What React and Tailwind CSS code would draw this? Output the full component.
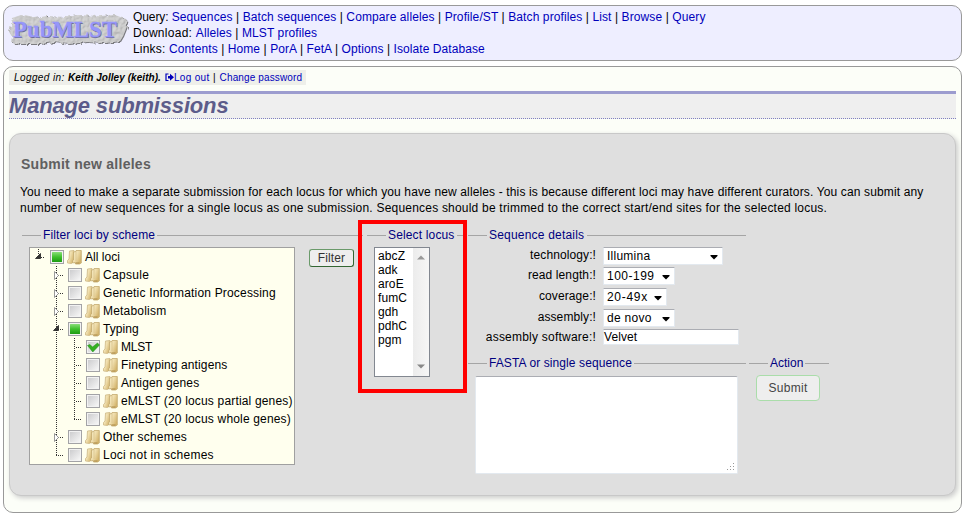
import React from "react";

const FONT = "font-['Liberation_Sans',Arial,sans-serif]";

function Links({ label, items, className, labelClass = "" }) {
  return (
    <div className={`whitespace-nowrap ${className}`}>
      <span className={labelClass}>{label}: </span>
      {items.map((item, i) => (
        <React.Fragment key={item}>
          {i > 0 && " | "}
          <a className="text-[#0000bb]">{item}</a>
        </React.Fragment>
      ))}
    </div>
  );
}

function Logo() {
  return (
    <svg width="122" height="36" viewBox="0 0 122 36" className="shrink-0">
      <defs>
        <filter id="stone" x="-5%" y="-10%" width="110%" height="120%">
          <feTurbulence type="fractalNoise" baseFrequency="0.28" numOctaves="2" seed="7" result="n" />
          <feDisplacementMap in="SourceGraphic" in2="n" scale="5" result="d" />
          <feDiffuseLighting in="n" surfaceScale="0.9" diffuseConstant="1.15" lightingColor="#cacaca" result="l">
            <feDistantLight azimuth="225" elevation="62" />
          </feDiffuseLighting>
          <feComposite in="l" in2="d" operator="in" result="tex" />
          <feDropShadow in="tex" dx="1" dy="1" stdDeviation="0.5" floodColor="#555" floodOpacity="0.75" />
        </filter>
      </defs>
      <path
        d="M5 6 L14 3 L28 6 L40 4 L58 5 L72 3 L92 4 L108 3 L119 7 L120 14 L116 24 L113 29 L98 31 L80 30 L62 32 L48 30 L32 32 L14 32 L5 31 L6 25 L2 20 L4 13 Z"
        fill="#c8c8c8"
        filter="url(#stone)"
      />
      <g fontFamily="'Liberation Serif', serif" fontWeight="700" fontSize="22.5">
        <text x="6.8" y="25.8" textLength="104" lengthAdjust="spacingAndGlyphs" fill="#6c6c96">PubMLST</text>
        <text x="6" y="25" textLength="104" lengthAdjust="spacingAndGlyphs" fill="#9696fa" stroke="#9696fa" strokeWidth="0.3">PubMLST</text>
      </g>
    </svg>
  );
}

function Legend({ children, className = "" }) {
  return (
    <div className="flex h-4 items-center whitespace-nowrap text-[#000080]">
      <span className="h-px w-[19px] bg-[#a5a5a5]" />
      <span className={`ml-0.5 ${className}`}>{children}</span>
      <span className="ml-0.5 h-px grow bg-[#a5a5a5]" />
    </div>
  );
}

/* One 18px cell of the tree: guide lines, optionally with an expander arrow. */
function Guide({ kind }) {
  const dots = { stroke: "#333", strokeDasharray: "1 1", shapeRendering: "crispEdges", fill: "none" };
  return (
    <svg width="18" height="18" className="shrink-0">
      {kind === "root" && <path d="M8.5 1V6M11 9.5H15" {...dots} />}
      {kind === "line" && <path d="M8.5 0V18" {...dots} />}
      {(kind === "tee" || kind === "closed" || kind === "open") && <path d="M8.5 0V18M10 9.5H15" {...dots} />}
      {kind === "end" && <path d="M8.5 0V9M8 9.5H15" {...dots} />}
      {kind === "closed" && <path d="M6.5 5.5V13.5L10.5 9.5Z" fill="#fff" stroke="#999" />}
      {(kind === "root" || kind === "open") && <path d="M10.5 5.5V10.5H5.5Z" fill="#333" stroke="#222" strokeWidth=".8" />}
    </svg>
  );
}

function Box({ state }) {
  return (
    <svg width="18" height="18" className="shrink-0">
      <defs>
        <linearGradient id="boxFill" x1="0" y1="0" x2="1" y2="1">
          <stop offset="0" stopColor="#cdcdcf" />
          <stop offset="1" stopColor="#f6f6f6" />
        </linearGradient>
        <linearGradient id="boxGreen" x1="0" y1="0" x2="0" y2="1">
          <stop offset="0" stopColor="#8ade78" />
          <stop offset="0.5" stopColor="#3fc02c" />
          <stop offset="1" stopColor="#1d9a12" />
        </linearGradient>
      </defs>
      <rect x="2.5" y="2.5" width="13" height="13" fill="#f2f2f2" stroke="#a3a3a6" />
      <rect x="4" y="4" width="10" height="10" fill="url(#boxFill)" />
      {state === "part" && <rect x="4" y="4" width="10" height="10" rx=".5" fill="url(#boxGreen)" />}
      {state === "on" && <path d="M3.5 7.5L6 6.5L8.5 9L13.5 5L15.5 7L8.8 14Z" fill="#35b023" stroke="#1f8a14" strokeWidth=".5" />}
    </svg>
  );
}

function Folder() {
  return (
    <svg width="18" height="18" className="mr-px shrink-0">
      <defs>
        <linearGradient id="fold" x1="0" y1="0" x2="1" y2="0.6">
          <stop offset="0" stopColor="#f6ebc6" />
          <stop offset="0.5" stopColor="#f0dfae" />
          <stop offset="1" stopColor="#d3b46c" />
        </linearGradient>
      </defs>
      <path d="M3.5 3L8 2.5V13L5.5 15.5L1.5 15V12.5L3 11Z" fill="url(#fold)" stroke="#cdb885" strokeWidth=".8" />
      <path d="M7.5 4L10 3.5V2.5H15.3V15L13.5 16H9.5L9 14.5L6.5 15V12.5L7.5 12Z" fill="url(#fold)" stroke="#c4ab70" strokeWidth=".8" />
      <path d="M10 4V13" stroke="#d9c48f" strokeWidth=".8" />
      <path d="M9.5 15H13.5" stroke="#ab8a48" />
    </svg>
  );
}

const TREE = [
  [["root"], "part", "All loci", "tracking-[0.05px]"],
  [["", "closed"], "off", "Capsule", "tracking-[0.3px]"],
  [["", "closed"], "off", "Genetic Information Processing", "tracking-[0.18px]"],
  [["", "closed"], "off", "Metabolism", "tracking-[0.2px]"],
  [["", "open"], "part", "Typing", "tracking-[0.05px]"],
  [["", "line", "tee"], "on", "MLST", "tracking-[-0.2px]"],
  [["", "line", "tee"], "off", "Finetyping antigens", "tracking-[0.12px]"],
  [["", "line", "tee"], "off", "Antigen genes", "tracking-[0.12px]"],
  [["", "line", "tee"], "off", "eMLST (20 locus partial genes)", "tracking-[0.17px]"],
  [["", "line", "end"], "off", "eMLST (20 locus whole genes)", "tracking-[0.17px]"],
  [["", "closed"], "off", "Other schemes", "tracking-[0.2px]"],
  [["", "end"], "off", "Loci not in schemes", "tracking-[0.25px]"],
];

function Tree() {
  return (
    <div className="ml-[7px] h-[218px] w-[266px] overflow-hidden border border-[#a0a0a0] bg-[#ffffee]">
      {TREE.map(([guides, state, label, track]) => (
        <div key={label} className="flex h-[18px] items-center whitespace-nowrap">
          {guides.map((g, i) => (
            <Guide key={i} kind={g} />
          ))}
          <Box state={state} />
          <Folder />
          <span className={`leading-[18px] ${track}`}>{label}</span>
        </div>
      ))}
    </div>
  );
}

function Scrollbar() {
  return (
    <div className="flex w-4 flex-col items-center justify-between bg-linear-to-r from-[#ececec] to-[#f6f6f6] py-[7px]">
      <svg width="8" height="5"><path d="M0 4.5L4 0.5L8 4.5Z" fill="#999" /></svg>
      <svg width="8" height="5"><path d="M0 0.5L4 4.5L8 0.5Z" fill="#888" /></svg>
    </div>
  );
}

function Select({ children, className }) {
  return (
    <div className={`flex items-center justify-between rounded-[1px] border border-[#e3e9ef] border-t-[#abadb3] bg-white px-[3px] ${className}`}>
      <span className="leading-4">{children}</span>
      <svg width="8" height="5" className="-ml-1 mr-px mt-[3px] shrink-0"><path d="M0.5 0H7.5V1L4 4.5L0.5 1Z" fill="#000" /></svg>
    </div>
  );
}

function Row({ label, labelClass = "tracking-[0.1px]", className, children }) {
  return (
    <div className={`flex items-start ${className}`}>
      <div className={`w-32 whitespace-nowrap text-right leading-4 ${labelClass}`}>{label}:!</div>
      <div className="ml-[7px] flex">{children}</div>
    </div>
  );
}

export default function App() {
  return (
    <div className={`h-[528px] w-[965px] overflow-hidden bg-white pl-[3px] pt-[5px] text-[12px] leading-4 text-black ${FONT}`}>
      <header className="flex h-14 w-[959px] rounded-[10px] border border-[#999] bg-[#eeeeff] pl-[3px] pt-[3px]">
        <div className="pt-[3px]"><Logo /></div>
        <nav className="ml-1">
          <Links
            label="Query"
            className="tracking-[0.1px]"
            labelClass="tracking-[-0.1px]"
            items={["Sequences", "Batch sequences", "Compare alleles", "Profile/ST", "Batch profiles", "List", "Browse", "Query"]}
          />
          <Links label="Download" className="tracking-[0.1px]" labelClass="tracking-[0.28px]" items={["Alleles", "MLST profiles"]} />
          <Links label="Links" className="tracking-[0.08px]" labelClass="tracking-[0.2px]" items={["Contents", "Home", "PorA", "FetA", "Options", "Isolate Database"]} />
        </nav>
      </header>

      <main className="mt-[5px] h-[447px] w-[959px] rounded-[10px] border border-[#999] bg-[#fcfef8] pl-[5px] pt-[3px]">
        <div className="flex h-[15px] w-[297px] items-center whitespace-nowrap bg-[#eeefea] pl-[5px] text-[10px]">
          <span className="w-[54px] italic tracking-[0.4px]">Logged in:</span>
          <b className="w-[94px] italic tracking-[0.06px]">Keith Jolley (keith).</b>
          <svg width="9" height="9" viewBox="0 0 9 9" className="ml-[3px] shrink-0">
            <path d="M3.5 1H1V7.5H3.5" fill="none" stroke="#0000bb" strokeWidth="1.2" />
            <path d="M3 3H5V0.8L9 4.3L5 7.8V5.6H3Z" fill="#0000bb" />
          </svg>
          <a className="w-9 tracking-[0.3px] text-[#0000bb]">Log out</a>
          <span className="ml-[3px] mr-1">|</span>
          <a className="tracking-[0.13px] text-[#0000bb]">Change password</a>
        </div>

        <h1 className="mt-1.5 h-7 w-[947px] border-b border-t-[3px] border-b-[#8080c0] border-t-[#9c9ccf] bg-[#efefef] text-[22px] font-bold italic leading-6 tracking-[-0.17px] text-[#5c5c8a] [border-bottom-style:dotted]">
          Manage submissions
        </h1>

        <section className="mt-3.5 h-[363px] w-[947px] rounded-[12px] border border-[#c8c8c8] bg-[#dfdfdf] pl-2.5 pt-[21px] shadow-[2px_2px_5px_#ccc]">
          <h2 className="pl-px text-[14px] font-bold leading-[18px] tracking-[0.26px] text-[#606060]">Submit new alleles</h2>
          <div className="mt-[11px] whitespace-nowrap">
            <p className="tracking-[0.136px]">
              You need to make a separate submission for each locus for which you have new alleles - this is because different loci may have different curators. You can submit any
            </p>
            <p className="tracking-[0.208px]">
              number of new sequences for a single locus as one submission. Sequences should be trimmed to the correct start/end sites for the selected locus.
            </p>
          </div>

          <div className="mt-[11px] flex pl-0.5">
            <div className="w-[341px]">
              <Legend className="w-[112px] tracking-[0.13px]">Filter loci by scheme</Legend>
              <div className="mt-1 flex items-start">
                <Tree />
                <button className="ml-3.5 mt-0.5 h-[18px] w-[45px] rounded-[3px] border border-[#6a9a6a] border-b-[#336633] border-r-[#336633] bg-[#eee] leading-4 tracking-[0.1px] text-[#333]">
                  Filter
                </button>
              </div>
            </div>

            <div className="relative ml-1 w-[97px]">
              <Legend className="w-[67px] tracking-[0.15px]">Select locus</Legend>
              <div className="ml-[7px] mt-1 flex h-[130px] w-14 justify-between border border-[#828790] bg-white">
                <ul className="pl-[3px] pt-px leading-[14px] tracking-[0.1px]">
                  {["abcZ", "adk", "aroE", "fumC", "gdh", "pdhC", "pgm"].map((l) => (
                    <li key={l}>{l}</li>
                  ))}
                </ul>
                <Scrollbar />
              </div>
              <div className="absolute -left-[9px] -top-[7px] h-[173px] w-[109px] border-4 border-[#ff0000]" />
            </div>

            <div className="ml-1">
              <div className="w-[278px]">
                <Legend className="w-[96px] tracking-[0.2px]">Sequence details</Legend>
                <div className="pt-1">
                  <Row label="technology" className="h-5">
                    <Select className="h-[18px] w-[120px] tracking-[0.25px]">Illumina</Select>
                  </Row>
                  <Row label="read length" className="h-[21px]">
                    <Select className="h-[18px] w-[72px] tracking-[0.5px]">100-199</Select>
                  </Row>
                  <Row label="coverage" className="h-[21px]">
                    <Select className="h-[18px] w-16 tracking-[0.7px]">20-49x</Select>
                  </Row>
                  <Row label="assembly" className="h-5">
                    <Select className="h-[18px] w-[72px] tracking-[0.3px]">de novo</Select>
                  </Row>
                  <Row label="assembly software" labelClass="tracking-[0.22px]" className="h-[17px]">
                    <div className="h-4 w-[136px] border border-[#e3e9ef] border-t-[#abadb3] bg-white leading-[14px] tracking-[0.1px]">Velvet</div>
                  </Row>
                </div>
              </div>
              <div className="mt-[9px] flex">
                <div className="w-[278px]">
                  <Legend className="w-[143px] tracking-[0.1px]">FASTA or single sequence</Legend>
                  <div className="ml-[7px] mt-[5px] flex h-[98px] w-[263px] items-end justify-end rounded-[2px] border border-[#e3e9ef] border-t-[#abadb3] bg-white p-0.5">
                    <svg width="9" height="9" shapeRendering="crispEdges" fill="#999">
                      <path d="M7 1h1v1h-1zM7 4h1v1h-1zM4 4h1v1h-1zM7 7h1v1h-1zM4 7h1v1h-1zM1 7h1v1h-1z" />
                    </svg>
                  </div>
                </div>
                <div className="ml-[3px] w-20">
                  <Legend className="w-[33px] tracking-normal">Action</Legend>
                  <button className="ml-[7px] mt-1 h-[26px] w-16 rounded-[4px] border border-[#aaddaa] bg-[#eee] tracking-[0.3px] text-[#444]">
                    Submit
                  </button>
                </div>
              </div>
            </div>
          </div>
        </section>
      </main>
    </div>
  );
}
